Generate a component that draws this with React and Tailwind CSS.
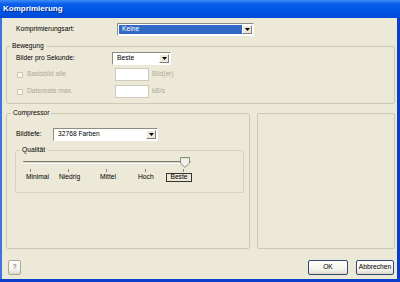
import React from "react";

const font = { fontFamily: '"Liberation Sans", Arial, sans-serif' };

const Arrow = () => (
	<div className="w-[10px] h-full flex items-center justify-center bg-[#ece9d8] border-t border-l border-t-white border-l-white border-b border-r border-b-[#808080] border-r-[#808080]">
		<svg width="5" height="3" viewBox="0 0 5 3">
			<path d="M0 0 H5 L2.5 3 Z" fill="#000" />
		</svg>
	</div>
);

const Combo = ({ value, width, selected }) => (
	<div
		className={`${width} h-[13px] flex border border-t-[#8f8d82] border-l-[#8f8d82] border-b-white border-r-white bg-white p-[1px]`}
	>
		<div
			className={`flex-1 flex items-center pl-[3px] text-[6.7px] leading-none ${
				selected ? "bg-[#316ac5] text-white" : "text-black"
			}`}
		>
			{value}
		</div>
		<Arrow />
	</div>
);

const Button = ({ children, width, border = "border-[#2f4a73]" }) => (
	<div
		className={`${width} ${border} h-[15px] flex items-center justify-center rounded-[2px] border bg-[linear-gradient(to_bottom,#ffffff,#f2f1ea_70%,#dcd9cb)] text-[6.7px] text-black leading-none`}
	>
		{children}
	</div>
);

const Check = () => (
	<div className="ml-[1px] mr-[4px] w-[6px] h-[6px] border border-[#cac8bb] bg-[#f7f6ef]" />
);

const App = () => {
	const ticks = ["ml-[14px]", "ml-[37px]", "ml-[37px]", "ml-[38px]", "ml-[37px]"];
	const labels = [
		["Minimal", "w-[33px]"],
		["Niedrig", "w-[41px]"],
		["Mittel", "w-[38px]"],
		["Hoch", "w-[28px]"],
	];

	return (
		<div className="w-[400px] h-[282px] flex flex-col bg-[#0a3ac8] overflow-hidden" style={font}>
			{/* title bar */}
			<div className="h-[18px] flex items-center pl-[3px] bg-[linear-gradient(to_bottom,#3d8ef7_0%,#0a5ee9_22%,#0055e5_55%,#0049d6_100%)]">
				<span className="text-white font-bold text-[8px] leading-none [text-shadow:1px_1px_0_#0a2a8a]">
					Komprimierung
				</span>
			</div>

			<div className="flex-1 flex">
				<div className="w-[2px] bg-[#3f74dc]" />
				<div className="flex-1 flex flex-col bg-[#ece9d8] text-[6.7px] leading-none text-black">
					{/* Komprimierungsart */}
					<div className="mt-[5px] h-[13px] flex items-center pl-[14px]">
						<span className="w-[101px]">Komprimierungsart:</span>
						<Combo value="Keine" width="w-[137px]" selected />
					</div>

					{/* Bewegung */}
					<fieldset className="mt-[5px] ml-[4px] w-[389px] h-[63px] border border-[#cbc8b8] rounded-[2px]">
						<legend className="ml-[3px] px-[2px] h-[10px] leading-[10px]">Bewegung</legend>
						<div className="mt-[1px] h-[13px] flex items-center pl-[9px]">
							<span className="w-[96px]">Bilder pro Sekunde:</span>
							<Combo value="Beste" width="w-[59px]" />
						</div>
						<div className="mt-[3px] h-[13px] flex items-center pl-[9px] text-[#aca899]">
							<Check />
							<span className="w-[88px]">Basisbild alle</span>
							<div className="w-[34px] h-full bg-white border border-[#cdcabb]" />
							<span className="ml-[3px]">Bild(er)</span>
						</div>
						<div className="mt-[4px] h-[13px] flex items-center pl-[9px] text-[#aca899]">
							<Check />
							<span className="w-[88px]">Datenrate max.</span>
							<div className="w-[34px] h-full bg-white border border-[#cdcabb]" />
							<span className="ml-[3px]">kB/s</span>
						</div>
					</fieldset>

					<div className="mt-[4px] flex">
						{/* Compressor */}
						<fieldset className="ml-[4px] w-[244px] h-[141px] border border-[#cbc8b8] rounded-[2px]">
							<legend className="ml-[4px] px-[2px] h-[10px] leading-[10px]">Compressor</legend>
							<div className="mt-[10px] h-[13px] flex items-center pl-[9px]">
								<span className="w-[37px]">Bildtiefe:</span>
								<Combo value="32768 Farben" width="w-[105px]" />
							</div>

							{/* Qualität */}
							<fieldset className="mt-[4px] ml-[8px] w-[229px] h-[48px] border border-[#d6d3c4] rounded-[2px]">
								<legend className="ml-[4px] px-[2px] h-[10px] leading-[10px]">Qualität</legend>
								<div className="relative ml-[7px] mt-[1px] w-[170px] h-[12px] flex items-center">
									<div className="w-[168px] h-[3px] border-t border-t-[#7f7d72] border-b border-b-white bg-[#d8d5c6] rounded-[1px]" />
									<svg
										className="absolute left-[156px] top-[1px]"
										width="12"
										height="11"
										viewBox="0 0 12 11"
									>
										<path
											d="M1.5 0.5 H10.5 V6 L6 10.5 L1.5 6 Z"
											fill="#f2f1ec"
											stroke="#8c8a7e"
										/>
										<path d="M2.5 1.5 H9.5" stroke="#d2e6c8" />
									</svg>
								</div>
								<div className="h-[3px] mt-[1px] flex">
									{ticks.map((m, i) => (
										<div key={i} className={`${m} w-[1px] h-full bg-[#8c8a7e]`} />
									))}
								</div>
								<div className="mt-[1px] h-[9px] flex items-center pl-[10px]">
									{labels.map(([t, w]) => (
										<span key={t} className={w}>
											{t}
										</span>
									))}
									<span className="w-[26px] h-[9px] flex items-center justify-center border border-[#333]">
										Beste
									</span>
								</div>
							</fieldset>
						</fieldset>

						<div className="mt-[5px] ml-[7px] w-[138px] h-[136px] border border-[#cbc8b8] rounded-[2px]" />
					</div>

					{/* buttons */}
					<div className="mt-[11px] flex items-center">
						<div className="ml-[6px]">
							<Button width="w-[13px]" border="border-[#a9a796]">
								<span className="text-[#555]">?</span>
							</Button>
						</div>
						<div className="ml-auto flex gap-[8px] mr-[3px]">
							<Button width="w-[40px]">OK</Button>
							<Button width="w-[38px]">Abbrechen</Button>
						</div>
					</div>
				</div>
				<div className="w-[3px] bg-[#0b3fc9]" />
			</div>
			<div className="h-[3px] bg-[#0b3fc9]" />
		</div>
	);
};

export default App;
